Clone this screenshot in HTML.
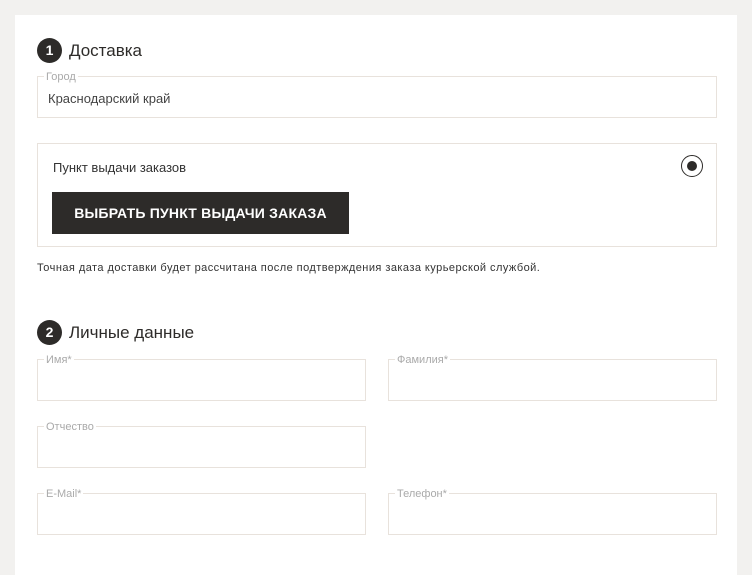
<!DOCTYPE html>
<html><head><meta charset="utf-8"><style>
*{margin:0;padding:0;box-sizing:border-box}
body{width:752px;height:567px;background:#f2f1ef;font-family:"Liberation Sans",sans-serif;position:relative;overflow:hidden;color:#2d2b29}
.panel{position:absolute;left:15px;top:15px;width:722px;height:560px;background:#fff}
.a{position:absolute}
.num{position:absolute;width:25px;height:25px;border-radius:50%;background:#2d2b29;color:#fff;font-size:14px;font-weight:bold;text-align:center;line-height:25px}
.h{position:absolute;font-size:17px;color:#2d2b29}
.f{position:absolute;border:1px solid #e8e2dc;height:42px}
.lg{position:absolute;top:-7px;left:6px;background:#fff;padding:0 2px;font-size:11px;color:#aaa;line-height:14px}
</style></head><body>
<div class="panel"></div>
<div class="num" style="left:37px;top:38px">1</div>
<div class="h" style="left:69px;top:41px">Доставка</div>
<div class="f" style="left:37px;top:76px;width:680px"><span class="lg">Город</span><span class="a" style="left:10px;top:14px;font-size:13px;color:#444">Краснодарский край</span></div>
<div class="f" style="left:37px;top:143px;width:680px;height:104px">
<span class="a" style="left:15px;top:16px;font-size:13px;color:#333">Пункт выдачи заказов</span>
<div class="a" style="left:643px;top:11px;width:22px;height:22px;border:1.5px solid #2d2b29;border-radius:50%"><div class="a" style="left:4.5px;top:4.5px;width:10px;height:10px;border-radius:50%;background:#2d2b29"></div></div>
<div class="a" style="left:14px;top:48px;width:297px;height:42px;background:#2d2b29;color:#fff;font-weight:bold;font-size:14px;letter-spacing:.2px;line-height:42px;text-align:center">ВЫБРАТЬ ПУНКТ ВЫДАЧИ ЗАКАЗА</div>
</div>
<div class="a" style="left:37px;top:262px;font-size:11px;letter-spacing:.45px;color:#333">Точная дата доставки будет рассчитана после подтверждения заказа курьерской службой.</div>
<div class="num" style="left:37px;top:320px">2</div>
<div class="h" style="left:69px;top:323px">Личные данные</div>
<div class="f" style="left:37px;top:359px;width:329px"><span class="lg">Имя*</span></div>
<div class="f" style="left:388px;top:359px;width:329px"><span class="lg">Фамилия*</span></div>
<div class="f" style="left:37px;top:426px;width:329px"><span class="lg">Отчество</span></div>
<div class="f" style="left:37px;top:493px;width:329px"><span class="lg">E-Mail*</span></div>
<div class="f" style="left:388px;top:493px;width:329px"><span class="lg">Телефон*</span></div>
</body></html>
